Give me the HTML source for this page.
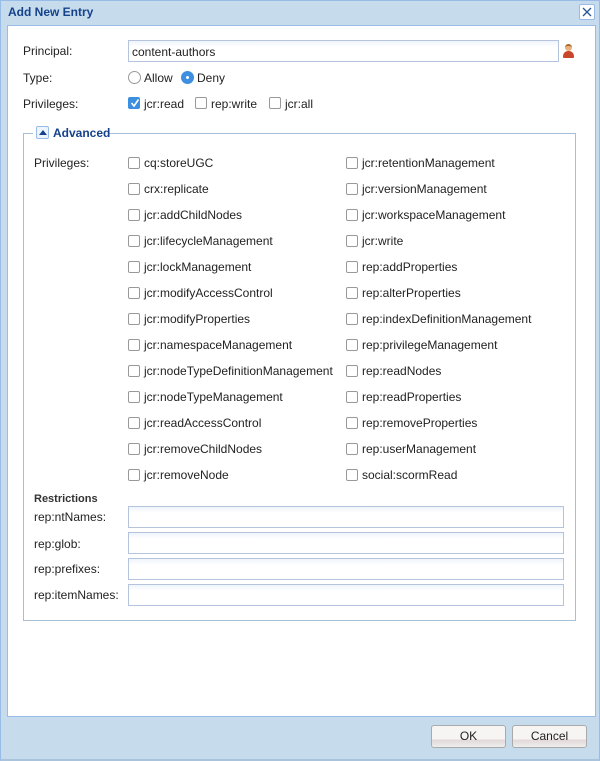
<!DOCTYPE html>
<html><head><meta charset="utf-8"><style>
*{box-sizing:border-box;margin:0;padding:0}
body{width:600px;height:761px;background:#c6dcec;font-family:"Liberation Sans",sans-serif;font-size:12px;color:#222;position:relative;overflow:hidden}
.abs{position:absolute}
.win{left:0;top:0;width:600px;height:761px;border:1px solid #99bbe8;border-bottom:2px solid #a9c3dc;background:#c6dcec}
.title{left:8px;top:5px;font-weight:bold;color:#15428b;font-size:12px}
.close{left:579px;top:4px;width:16px;height:16px;border:1px solid #99bbe8;background:#fff;border-radius:2px}
.panel{left:7px;top:25px;width:589px;height:692px;background:#fff;border:1px solid #99bbe8}
.lbl{font-size:12px;color:#222}
.input{border:1px solid #b5c3dc;background:linear-gradient(#eef4f9,#fff 6px);height:22px}
.cb{width:12px;height:12px;border:1px solid #999;border-radius:2px;background:#fff}
.rd{width:13px;height:13px;border:1px solid #999;border-radius:50%;background:#fff}
.fs{left:23px;top:133px;width:553px;height:488px;border:1px solid #a8bfd8}
.btn{height:23px;border:1px solid #aaa;border-radius:3px;background:linear-gradient(#f7f4f4 65%,#e2d8d8 65%,#eee);text-align:center;line-height:20px;font-size:12px}
</style></head><body>
<div class="abs win"></div>
<div class="abs title">Add New Entry</div>
<div class="abs close"><svg width="14" height="14" viewBox="0 0 14 14"><path d="M3 3L11 11M11 3L3 11" stroke="#2a5a9a" stroke-width="1.4"/></svg></div>
<div class="abs panel"></div>

<div class="abs lbl" style="left:23px;top:44px">Principal:</div>
<div class="abs input" style="left:128px;top:40px;width:431px;padding:4px 3px">content-authors</div>
<div class="abs" style="left:563px;top:44px;width:10px;height:14px">
 <div class="abs" style="left:2px;top:0;width:7px;height:7px;border-radius:50%;background:#e9b27a;border-top:2px solid #a76a2a"></div>
 <div class="abs" style="left:0;top:7px;width:11px;height:7px;border-radius:5px 5px 1px 1px;background:#c8462a"></div>
</div>

<div class="abs lbl" style="left:23px;top:71px">Type:</div>
<div class="abs rd" style="left:128px;top:71px"></div>
<div class="abs lbl" style="left:144px;top:71px">Allow</div>
<div class="abs rd" style="left:181px;top:71px;background:#3d8fe0;border-color:#3d8fe0"><div class="abs" style="left:4px;top:4px;width:3px;height:3px;background:#fff;border-radius:50%"></div></div>
<div class="abs lbl" style="left:197px;top:71px">Deny</div>

<div class="abs lbl" style="left:23px;top:97px">Privileges:</div>
<div class="abs cb" style="left:128px;top:97px;background:#3d8fe0;border-color:#3d8fe0"><svg class="abs" style="left:1px;top:0" width="10" height="10"><path d="M1.5 5L4 8L8.5 1.5" stroke="#fff" stroke-width="1.6" fill="none"/></svg></div>
<div class="abs lbl" style="left:144px;top:97px">jcr:read</div>
<div class="abs cb" style="left:195px;top:97px"></div>
<div class="abs lbl" style="left:211px;top:97px">rep:write</div>
<div class="abs cb" style="left:269px;top:97px"></div>
<div class="abs lbl" style="left:285px;top:97px">jcr:all</div>

<div class="abs fs"></div>
<div class="abs" style="left:33px;top:125px;width:76px;height:16px;background:#fff"></div>
<div class="abs" style="left:36px;top:126px;width:13px;height:13px;border:1px solid #99bbe8;border-radius:2px;background:#eef4fb"><svg class="abs" style="left:2px;top:3px" width="8" height="5"><path d="M0 5L4 0L8 5Z" fill="#15428b"/></svg></div>
<div class="abs" style="left:53px;top:126px;font-weight:bold;color:#15428b">Advanced</div>

<div class="abs lbl" style="left:34px;top:156px">Privileges:</div>

<div class="abs cb" style="left:128px;top:157px"></div><div class="abs lbl" style="left:144px;top:156px">cq:storeUGC</div>
<div class="abs cb" style="left:128px;top:183px"></div><div class="abs lbl" style="left:144px;top:182px">crx:replicate</div>
<div class="abs cb" style="left:128px;top:209px"></div><div class="abs lbl" style="left:144px;top:208px">jcr:addChildNodes</div>
<div class="abs cb" style="left:128px;top:235px"></div><div class="abs lbl" style="left:144px;top:234px">jcr:lifecycleManagement</div>
<div class="abs cb" style="left:128px;top:261px"></div><div class="abs lbl" style="left:144px;top:260px">jcr:lockManagement</div>
<div class="abs cb" style="left:128px;top:287px"></div><div class="abs lbl" style="left:144px;top:286px">jcr:modifyAccessControl</div>
<div class="abs cb" style="left:128px;top:313px"></div><div class="abs lbl" style="left:144px;top:312px">jcr:modifyProperties</div>
<div class="abs cb" style="left:128px;top:339px"></div><div class="abs lbl" style="left:144px;top:338px">jcr:namespaceManagement</div>
<div class="abs cb" style="left:128px;top:365px"></div><div class="abs lbl" style="left:144px;top:364px">jcr:nodeTypeDefinitionManagement</div>
<div class="abs cb" style="left:128px;top:391px"></div><div class="abs lbl" style="left:144px;top:390px">jcr:nodeTypeManagement</div>
<div class="abs cb" style="left:128px;top:417px"></div><div class="abs lbl" style="left:144px;top:416px">jcr:readAccessControl</div>
<div class="abs cb" style="left:128px;top:443px"></div><div class="abs lbl" style="left:144px;top:442px">jcr:removeChildNodes</div>
<div class="abs cb" style="left:128px;top:469px"></div><div class="abs lbl" style="left:144px;top:468px">jcr:removeNode</div>

<div class="abs cb" style="left:346px;top:157px"></div><div class="abs lbl" style="left:362px;top:156px">jcr:retentionManagement</div>
<div class="abs cb" style="left:346px;top:183px"></div><div class="abs lbl" style="left:362px;top:182px">jcr:versionManagement</div>
<div class="abs cb" style="left:346px;top:209px"></div><div class="abs lbl" style="left:362px;top:208px">jcr:workspaceManagement</div>
<div class="abs cb" style="left:346px;top:235px"></div><div class="abs lbl" style="left:362px;top:234px">jcr:write</div>
<div class="abs cb" style="left:346px;top:261px"></div><div class="abs lbl" style="left:362px;top:260px">rep:addProperties</div>
<div class="abs cb" style="left:346px;top:287px"></div><div class="abs lbl" style="left:362px;top:286px">rep:alterProperties</div>
<div class="abs cb" style="left:346px;top:313px"></div><div class="abs lbl" style="left:362px;top:312px">rep:indexDefinitionManagement</div>
<div class="abs cb" style="left:346px;top:339px"></div><div class="abs lbl" style="left:362px;top:338px">rep:privilegeManagement</div>
<div class="abs cb" style="left:346px;top:365px"></div><div class="abs lbl" style="left:362px;top:364px">rep:readNodes</div>
<div class="abs cb" style="left:346px;top:391px"></div><div class="abs lbl" style="left:362px;top:390px">rep:readProperties</div>
<div class="abs cb" style="left:346px;top:417px"></div><div class="abs lbl" style="left:362px;top:416px">rep:removeProperties</div>
<div class="abs cb" style="left:346px;top:443px"></div><div class="abs lbl" style="left:362px;top:442px">rep:userManagement</div>
<div class="abs cb" style="left:346px;top:469px"></div><div class="abs lbl" style="left:362px;top:468px">social:scormRead</div>

<div class="abs" style="left:34px;top:493px;font-weight:bold;font-size:11px;color:#333">Restrictions</div>
<div class="abs lbl" style="left:34px;top:510px">rep:ntNames:</div>
<div class="abs input" style="left:128px;top:506px;width:436px"></div>
<div class="abs lbl" style="left:34px;top:537px">rep:glob:</div>
<div class="abs input" style="left:128px;top:532px;width:436px"></div>
<div class="abs lbl" style="left:34px;top:562px">rep:prefixes:</div>
<div class="abs input" style="left:128px;top:558px;width:436px"></div>
<div class="abs lbl" style="left:34px;top:588px">rep:itemNames:</div>
<div class="abs input" style="left:128px;top:584px;width:436px"></div>

<div class="abs btn" style="left:431px;top:725px;width:75px">OK</div>
<div class="abs btn" style="left:512px;top:725px;width:75px">Cancel</div>
</body></html>
